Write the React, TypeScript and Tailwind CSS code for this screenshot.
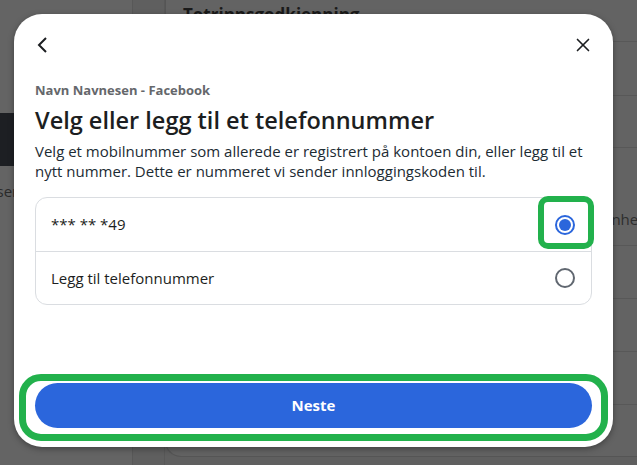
import { X } from "lucide-react";

function Radio({ checked }: { checked: boolean }) {
  return checked ? (
    <span className="flex h-[20px] w-[20px] items-center justify-center rounded-full border-2 border-[#2b66dc]">
      <span className="h-[12px] w-[12px] rounded-full bg-[#2b66dc]" />
    </span>
  ) : (
    <span className="h-[20px] w-[20px] rounded-full border-2 border-[#606770]" />
  );
}

export default function App() {
  const rows = [
    { label: "*** ** *49", checked: true },
    { label: "Legg til telefonnummer", checked: false },
  ];

  return (
    <div
      className="relative h-[465px] w-[637px] overflow-hidden bg-[#606060]"
      style={{ fontFamily: '"Open Sans", Roboto, "Liberation Sans", Arial, sans-serif' }}
    >
      {/* dimmed page behind the dialog */}
      <div className="flex h-full">
        <aside className="flex w-[133px] flex-col border-r border-[#585858] bg-[#646464] pt-[113px]">
          <div className="h-[53px] bg-[#1d1f23]" />
          <div className="pt-[14px] text-[15px] text-[#2a2a2a]">
            <span className="-ml-[28px]">Passer</span>
          </div>
        </aside>
        <div className="w-[32px] border-r border-[#585858] bg-[#5f5f5f]" />
        <main className="min-w-0 flex-1 bg-[#5f5f5f] pb-[8px]">
          <div className="h-full rounded-bl-[16px] border-b border-l border-[#555] bg-[#636363]">
            <div className="h-[42px] border-b border-[#585858] pl-[17px] pt-[2px] text-[17px] font-bold text-[#1a1a1a]">
              Totrinnsgodkjenning
            </div>
            <div className="h-[54px] border-b border-[#585858]" />
            <div className="h-[52px] border-b border-[#585858]" />
            <div className="flex h-[98px] items-center whitespace-nowrap border-b border-[#585858] pl-[437px] pt-[46px] text-[15px] text-[#2e2e2e]">
              enheter
            </div>
            <div className="h-[53px] border-b border-[#585858]" />
            <div className="h-[53px] border-b border-[#585858]" />
            <div className="h-[53px] border-b border-[#585858]" />
          </div>
        </main>
      </div>

      {/* dialog */}
      <div className="absolute left-[14px] top-[14px] flex h-[433px] w-[599px] flex-col rounded-[28px] bg-white px-[21px] pb-[19px] shadow-[0_2px_6px_rgba(0,0,0,0.35)]">
        <div className="flex h-[39px] items-end justify-between pt-[24px]">
          <svg width="12" height="16" viewBox="0 0 12 16" className="ml-[1px]">
            <path d="M10 1 L3 8 L10 15" fill="none" stroke="#1c1e21" strokeWidth="2" />
          </svg>
          <X size={22} strokeWidth={1.8} color="#1c1e21" className="-mr-[2px] -mb-[3px]" />
        </div>

        <div className="mt-[29px] text-[13px] font-bold leading-[16px] text-[#65676b]">
          Navn Navnesen - Facebook
        </div>
        <h1 className="mt-[7px] text-[23.5px] font-semibold leading-[30px] text-[#1c1e21]">
          Velg eller legg til et telefonnummer
        </h1>
        <p className="mt-[6px] text-[15px] leading-[20px] text-[#1c2b33]">
          Velg et mobilnummer som allerede er registrert på kontoen din, eller legg til et nytt nummer. Dette er nummeret vi sender innloggingskoden til.
        </p>

        <div className="mt-[16px] flex flex-col rounded-[12px] border border-[#dadde1]">
          {rows.map((row, i) => (
            <div
              key={row.label}
              className={`flex h-[53px] items-center justify-between pl-[15px] pr-[16px] text-[15px] text-[#1c1e21] ${
                i > 0 ? "border-t border-[#dadde1]" : ""
              }`}
            >
              <span>{row.label}</span>
              <Radio checked={row.checked} />
            </div>
          ))}
        </div>

        <div className="flex-1" />

        <button className="h-[45px] w-full rounded-full bg-[#2b66dc] text-[15px] font-bold text-white">
          Neste
        </button>
      </div>

      {/* annotation marks */}
      <div className="absolute left-[538px] top-[196px] h-[53px] w-[56px] rounded-[10px] border-[6px] border-[#22b14c]" />
      <div className="absolute left-[19px] top-[374px] h-[67px] w-[589px] rounded-[22px] border-[7px] border-[#22b14c]" />
    </div>
  );
}
